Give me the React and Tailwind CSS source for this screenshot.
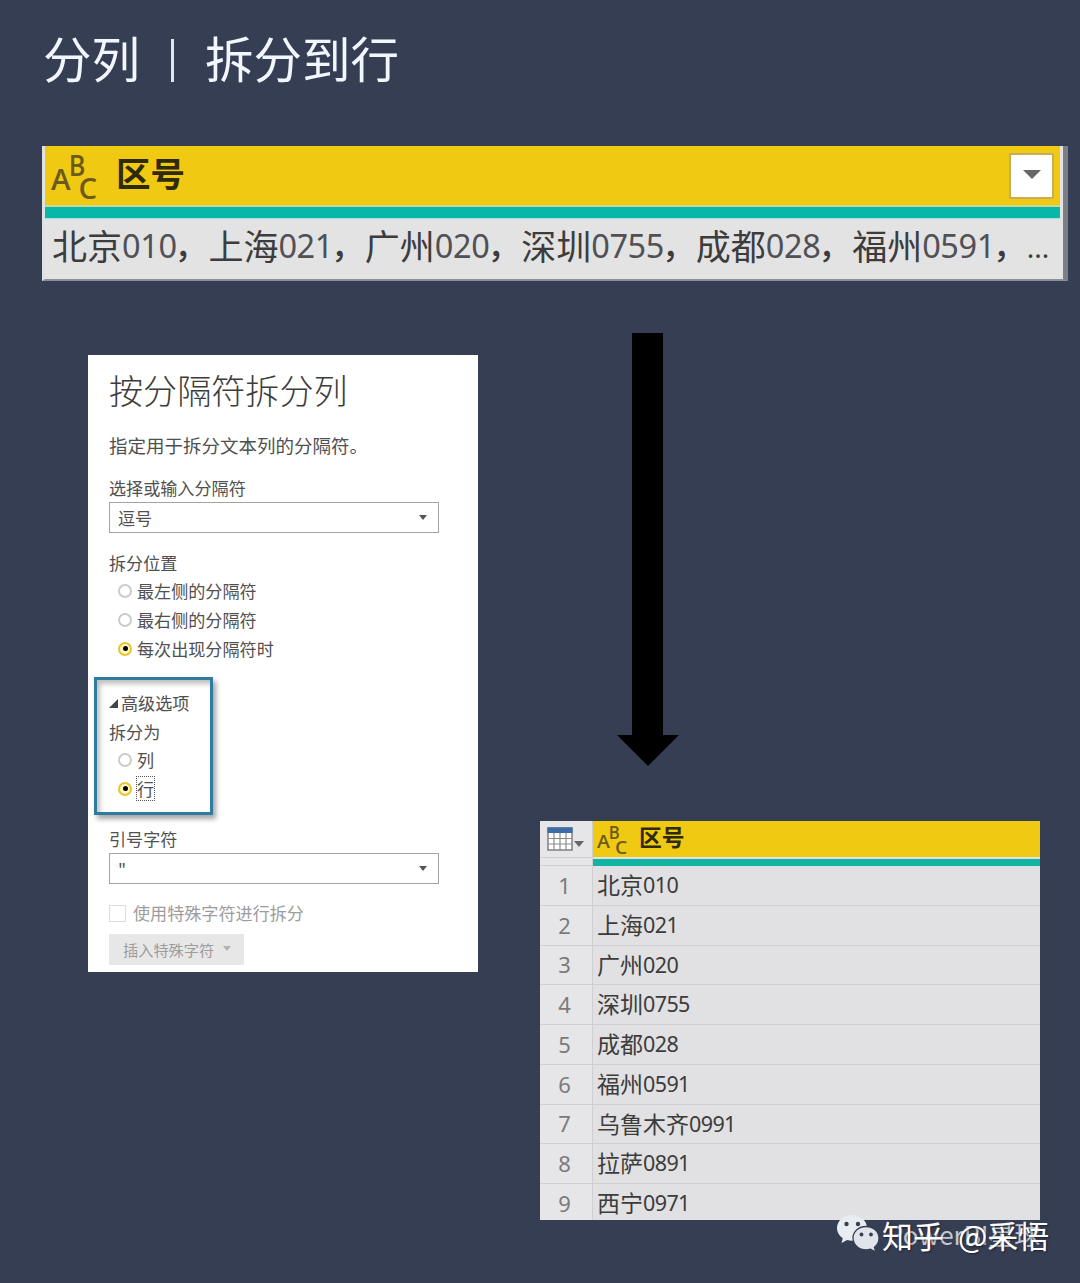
import React, { useState } from 'react';
import clsx from 'clsx';

const cities = [
  { name: '北京', code: '010' },
  { name: '上海', code: '021' },
  { name: '广州', code: '020' },
  { name: '深圳', code: '0755' },
  { name: '成都', code: '028' },
  { name: '福州', code: '0591' },
  { name: '乌鲁木齐', code: '0991' },
  { name: '拉萨', code: '0891' },
  { name: '西宁', code: '0971' },
];

const positions = ['最左侧的分隔符', '最右侧的分隔符', '每次出现分隔符时'];

const TextTypeIcon = ({ className }) => (
  <svg viewBox="0 0 48 48" className={clsx('overflow-visible', className)} fill="#6b5a1c">
    <g fontFamily="'Open Sans', sans-serif" fontSize="29" fontWeight="600">
      <text x="0" y="39" textLength="20" lengthAdjust="spacingAndGlyphs">A</text>
      <text x="18" y="24" textLength="17" lengthAdjust="spacingAndGlyphs">B</text>
      <text x="28" y="47.500" textLength="19" lengthAdjust="spacingAndGlyphs">C</text>
    </g>
  </svg>
);

const TableIcon = () => (
  <svg viewBox="0 0 26 24" className="h-[24px] w-[26px]">
    <rect x="1" y="1" width="24" height="22" fill="#fff" stroke="#777" strokeWidth="1.4" />
    <rect x="0.4" y="0.4" width="25.2" height="5.6" fill="#3c6ea5" />
    <path d="M7 6v17M13 6v17M19 6v17M1 11.5h24M1 17h24" stroke="#8c8c8c" strokeWidth="1.2" />
  </svg>
);

const Caret = ({ className }) => (
  <svg viewBox="0 0 10 6" className={className} fill="currentColor" preserveAspectRatio="none">
    <path d="M0 0h10L5 6z" />
  </svg>
);

const Radio = ({ label, checked, focused, onClick }) => (
  <button type="button" onClick={onClick} className="ml-[9px] flex h-[29px] items-center gap-[5px]">
    <span
      className={clsx(
        'flex h-[14px] w-[14px] items-center justify-center rounded-full border-2',
        checked ? 'border-[#e6c62f] bg-[#fff7c4]' : 'border-[#cbcbcb] bg-white'
      )}
    >
      {checked && <span className="h-[5px] w-[5px] rounded-full bg-black" />}
    </span>
    <span className={clsx('text-[17.1px] leading-[23px]', focused && 'outline-1 outline-dotted outline-[#555]')}>
      {label}
    </span>
  </button>
);

const Select = ({ value }) => (
  <div className="flex h-[31px] w-[330px] items-center justify-between border-[1.5px] border-[#a3a3a3] bg-white pl-[8px] pr-[11px]">
    <span className="text-[17.1px] leading-[24px]">{value}</span>
    <Caret className="h-[5px] w-[8px] text-[#555]" />
  </div>
);

const SplitDialog = () => {
  const [position, setPosition] = useState(2);
  const [splitInto, setSplitInto] = useState('行');

  return (
    <div className="h-[617px] w-[390px] bg-white px-[21px] pt-[11px] text-[17.1px] text-[#505050]">
      <h2 className="h-[48px] text-[34.1px] font-light leading-[46px] text-[#3c3c3c]">按分隔符拆分列</h2>
      <p className="mt-[18px] h-[26px] text-[18.5px] leading-[26px]">指定用于拆分文本列的分隔符。</p>
      <div className="mt-[17px] h-[27px] leading-[26px]">选择或输入分隔符</div>
      <Select value="逗号" />
      <div className="mt-[17px] h-[26px] leading-[26px]">拆分位置</div>
      {positions.map((label, i) => (
        <Radio key={label} label={label} checked={position === i} onClick={() => setPosition(i)} />
      ))}

      {/* Highlighted advanced options */}
      <div className="-ml-[15px] mt-[14px] h-[138px] w-[119px] border-[3px] border-[#2e7ca0] pl-[12px] pt-[9px] shadow-[3px_4px_5px_rgba(0,0,0,0.35),inset_3px_4px_5px_rgba(0,0,0,0.25)]">
        <div className="flex h-[28px] items-center gap-[3px]">
          <svg viewBox="0 0 9 9" className="h-[9px] w-[9px]">
            <path d="M9 0v9H0z" fill="#444" />
          </svg>
          <span>高级选项</span>
        </div>
        <div className="h-[28px] leading-[29px]">拆分为</div>
        {['列', '行'].map((label) => (
          <Radio
            key={label}
            label={label}
            checked={splitInto === label}
            focused={splitInto === label}
            onClick={() => setSplitInto(label)}
          />
        ))}
      </div>

      <div className="mt-[11px] h-[27px] leading-[26px]">引号字符</div>
      <Select value={'"'} />
      <div className="mt-[16px] flex h-[26px] items-center gap-[7px] text-[#9c9c9c]">
        <span className="h-[17px] w-[17px] border border-[#dcdcdc]" />
        <span>使用特殊字符进行拆分</span>
      </div>
      <button
        type="button"
        className="mt-[8px] flex h-[31px] w-[135px] items-center gap-[9px] bg-[#e7e7e8] pl-[14px] text-[15.2px] text-[#9c9c9c]"
      >
        插入特殊字符
        <Caret className="-mt-[2px] h-[5px] w-[8px] text-[#b3b3b3]" />
      </button>
    </div>
  );
};

const SourceColumn = () => (
  <div className="h-[135px] w-[1026px] border-b-2 border-l-[3px] border-r-[5px] border-b-[#8b9096] border-l-[#dfe2e2] border-r-[#7d7f86] bg-[#e3e3e4] pr-[3px]">
    <div className="flex h-[59px] items-center justify-between bg-[#f0ca12] pl-[6px] pr-[6px]">
      <div className="flex items-center">
        <TextTypeIcon className="h-[47px] w-[47px]" />
        <span className="ml-[18px] -mt-[7px] text-[34.5px] font-bold leading-[44px] text-[#2f2a0c]">区号</span>
      </div>
      <div className="flex h-[46px] w-[45px] items-center justify-center border-2 border-[#c9ad5b] bg-white">
        <Caret className="-mt-[3px] h-[9px] w-[18px] text-[#666]" />
      </div>
    </div>
    <div className="h-[14px] border-b border-t-2 border-b-[#a9e0da] border-t-[#c9d79a] bg-[#07b8a8]" />
    <div className="flex h-[55px] items-center whitespace-nowrap pl-[7px] text-[#3c3c3c]">
      {cities.slice(0, 6).map((city) => (
        <div key={city.name} className="flex items-baseline leading-[50px]">
          <span className="text-[35px]">{city.name}</span>
          <span className="-translate-y-[2px] font-['Noto_Sans'] text-[32.5px] tracking-[-0.4px] text-[#505055]">
            {city.code}
          </span>
          <span className="-ml-[2px] w-[33.8px] -translate-y-[2px] text-[33px] font-medium">，</span>
        </div>
      ))}
      <span className="font-['Noto_Sans'] text-[28px] leading-[50px]">...</span>
    </div>
  </div>
);

const ResultTable = () => (
  <div className="h-[399px] w-[500px] overflow-hidden bg-[#e1e0e2]">
    <div className="flex h-[45px]">
      <div className="w-[53px] border-b border-r border-[#cfcfd1] bg-[#e6e6e8]">
        <div className="flex h-[37px] items-center border-b border-[#cfcfd1] pl-[7px]">
          <TableIcon />
          <Caret className="ml-[1px] mt-[10px] h-[6px] w-[10px] text-[#666]" />
        </div>
      </div>
      <div className="flex-1">
        <div className="flex h-[36px] items-center bg-[#f0ca12] pl-[4px]">
          <TextTypeIcon className="-mt-[2px] h-[31px] w-[31px]" />
          <span className="ml-[11px] -mt-[5px] text-[22.8px] font-bold leading-[30px] text-[#2f2a0c]">区号</span>
        </div>
        <div className="mt-[2px] h-[7px] bg-[#12b3a2]" />
      </div>
    </div>
    {cities.map((city, index) => (
      <div key={city.name} className="flex h-[39.75px] border-b border-[#cfcfd1]">
        <div className="flex w-[53px] items-center justify-center border-r border-[#cfcfd1] bg-[#e6e6e8] pr-[3px] font-['Noto_Sans'] text-[22px] text-[#7a7a7e]">
          {index + 1}
        </div>
        <div className="flex items-baseline pl-[4px] leading-[36px] text-[#3c3c3c]">
          <span className="text-[23px]">{city.name}</span>
          <span className="-translate-y-[1px] font-['Noto_Sans'] text-[21.5px] tracking-[-0.6px]">{city.code}</span>
        </div>
      </div>
    ))}
  </div>
);

const Watermark = () => (
  <div className="absolute left-[837px] top-[1213px] h-[46px] w-[230px] whitespace-nowrap">
    <svg viewBox="0 0 44 38" className="absolute left-0 top-[2px] h-[38px] w-[44px]">
      <path d="M15 0C6.700 0 0 5.700 0 13c0 4.200 2.300 7.900 5.800 10.200L4.500 28l5.600-2.900c1.600.4 3.200.7 4.900.7 8.300 0 15-5.700 15-12.900S23.300 0 15 0z" fill="#e8edf2" />
      <circle cx="9.500" cy="9" r="2.200" fill="#354052" />
      <circle cx="21" cy="9" r="2.200" fill="#354052" />
      <path d="M29 11.500c-7.200 0-13 5-13 11.600s5.800 11.700 13 11.700c1.600 0 3.100-.2 4.500-.7l5.300 2.900-1.400-4.700c2.800-2.100 4.600-5.500 4.600-9.200 0-6.600-5.800-11.600-13-11.600z" fill="#e1e5eb" stroke="#354052" strokeWidth="1.300" />
      <circle cx="24.500" cy="19.500" r="1.900" fill="#354052" />
      <circle cx="34" cy="19.500" r="1.900" fill="#354052" />
    </svg>
    <span className="absolute left-[50px] top-[2px] text-[26px] leading-[38px] text-[#c3c8d1]">PowerBI星球</span>
    <span className="absolute left-[45px] top-[-1px] text-[31px] leading-[46px] text-white [text-shadow:1px_1px_2px_rgba(0,0,0,0.5)] [word-spacing:7px]">
      知乎 @采悟
    </span>
  </div>
);

export default function App() {
  return (
    <div className="relative h-[1283px] w-[1080px] overflow-hidden bg-[#363e54] font-['Noto_Sans_CJK_SC',sans-serif]">
      <h1 className="flex h-[146px] pl-[43px] pt-[23px] text-[48.5px] font-normal leading-[68px] text-[#f1f6ff]">
        <span>分列</span>
        <span className="mx-[31px] mt-[16px] h-[43px] w-[3px] bg-[#dfe5f2]" />
        <span>拆分到行</span>
      </h1>
      <div className="pl-[42px]">
        <SourceColumn />
      </div>
      <div className="flex">
        <div className="pl-[88px] pt-[74px]">
          <SplitDialog />
        </div>
        <div className="pl-[62px] pt-[52px]">
          <svg viewBox="0 0 62 433" className="ml-[77px] h-[433px] w-[62px]">
            <path d="M15 0h31v402h16L31 433 0 402h15z" fill="#000" />
          </svg>
          <div className="pt-[55px]">
            <ResultTable />
          </div>
        </div>
      </div>
      <Watermark />
    </div>
  );
}
